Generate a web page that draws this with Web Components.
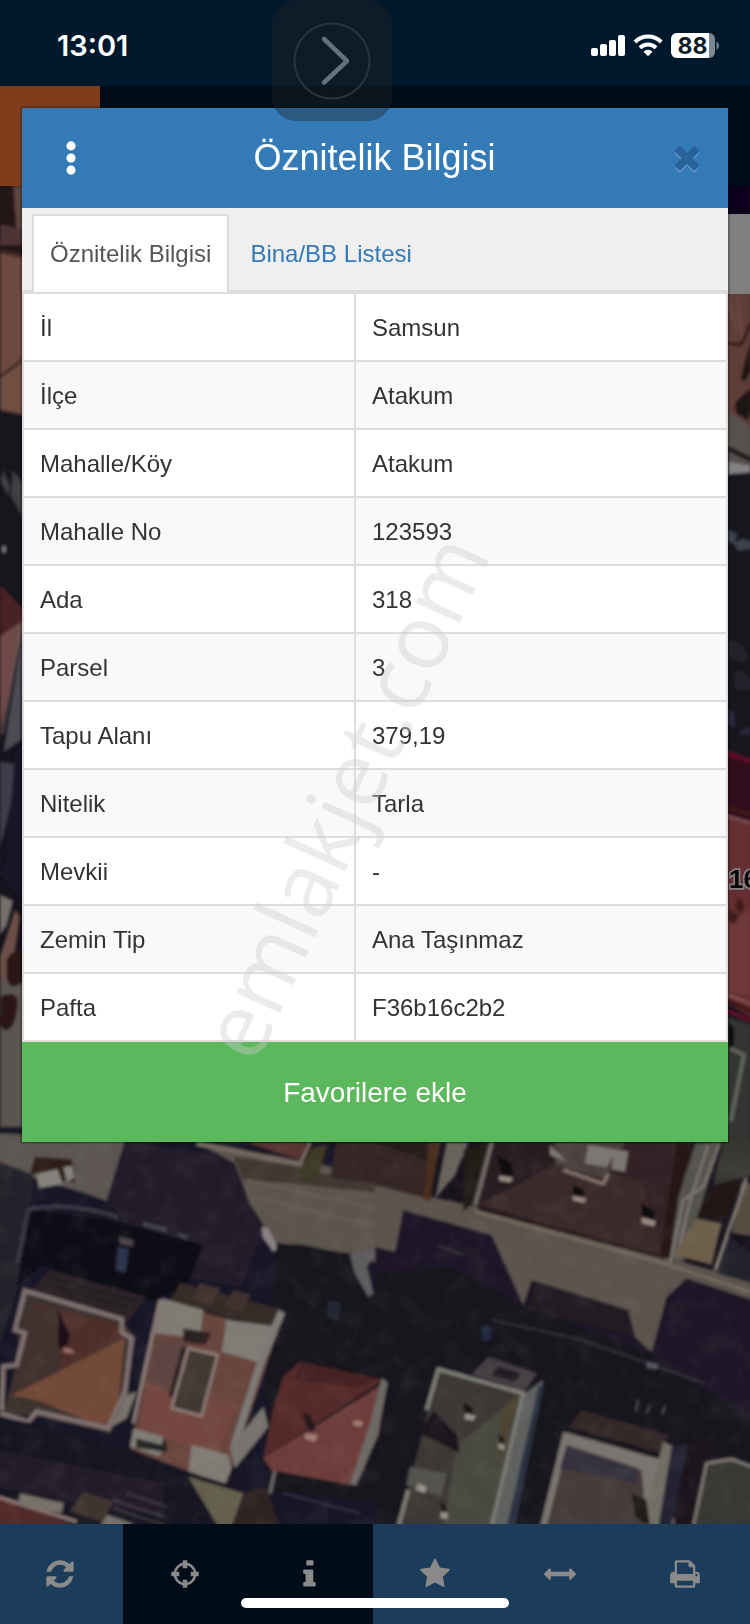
<!DOCTYPE html>
<html lang="tr">

<head>
  <meta charset="utf-8">
  <title>Öznitelik Bilgisi</title>
  <style>
    html, body { margin: 0; padding: 0; }
    body {
      width: 750px;
      height: 1624px;
      overflow: hidden;
      background: #17131d;
      font-family: "Liberation Sans", Arial, sans-serif;
    }
  </style>
</head>

<body>
  <parcel-app>
    <attribute-dialog heading="Öznitelik Bilgisi">
      <tab-item slot="tabs" active>Öznitelik Bilgisi</tab-item>
      <tab-item slot="tabs">Bina/BB Listesi</tab-item>
      <attribute-row name="İl">Samsun</attribute-row>
      <attribute-row name="İlçe">Atakum</attribute-row>
      <attribute-row name="Mahalle/Köy">Atakum</attribute-row>
      <attribute-row name="Mahalle No">123593</attribute-row>
      <attribute-row name="Ada">318</attribute-row>
      <attribute-row name="Parsel">3</attribute-row>
      <attribute-row name="Tapu Alanı">379,19</attribute-row>
      <attribute-row name="Nitelik">Tarla</attribute-row>
      <attribute-row name="Mevkii">-</attribute-row>
      <attribute-row name="Zemin Tip">Ana Taşınmaz</attribute-row>
      <attribute-row name="Pafta">F36b16c2b2</attribute-row>
      <span slot="action">Favorilere ekle</span>
    </attribute-dialog>
  </parcel-app>

  <script>
    function define(name, html) {
      customElements.define(name, class extends HTMLElement {
        constructor() {
          super();
          this.attachShadow({ mode: "open" }).innerHTML = html;
        }
      });
    }

    const icons = {
      refresh: `<path d="M1639 1056q0 5-1 7-64 268-268 434.5t-478 166.5q-146 0-282.5-55t-243.5-157l-129 129q-19 19-45 19t-45-19-19-45v-448q0-26 19-45t45-19h448q26 0 45 19t19 45-19 45l-137 137q71 66 161 102t187 36q134 0 250-65t186-179q11-17 53-117 8-23 30-23h192q13 0 22.5 9.5t9.5 22.5zm25-800v448q0 26-19 45t-45 19h-448q-26 0-45-19t-19-45 19-45l138-138q-148-137-349-137-134 0-250 65t-186 179q-11 17-53 117-8 23-30 23h-199q-13 0-22.5-9.5t-9.5-22.5v-7q65-268 270-434.5t480-166.5q146 0 284 55.5t245 156.5l130-129q19-19 45-19t45 19 19 45z"/>`,
      crosshairs: `<circle cx="896" cy="896" r="570" fill="none" stroke="currentColor" stroke-width="140"/>
        <g stroke="currentColor" stroke-width="250">
          <path d="M896 128v448M896 1216v448M128 896h448M1216 896h448"/>
        </g>`,
      info: `<rect x="690" y="128" width="400" height="290" rx="60"/>
        <path d="M576 640h440q64 0 64 64v640h70q64 0 64 64v128q0 64-64 64H576q-64 0-64-64v-128q0-64 64-64h70V896h-70q-64 0-64-64V704q0-64 64-64z"/>`,
      star: `<path d="M1728 647q0 22-26 48l-363 354 86 500q1 7 1 20 0 21-10.5 35.5t-30.5 14.5q-19 0-40-12l-449-236-449 236q-22 12-40 12-21 0-31.5-14.5t-10.5-35.5q0-6 2-20l86-500-364-354q-25-27-25-48 0-37 56-46l502-73 225-455q19-41 49-41t49 41l225 455 502 73q56 9 56 46z"/>`,
      arrows: `<path d="M1792 896q0 26-19 45l-256 256q-19 19-45 19t-45-19-19-45v-128h-1024v128q0 26-19 45t-45 19-45-19l-256-256q-19-19-19-45t19-45l256-256q19-19 45-19t45 19 19 45v128h1024v-128q0-26 19-45t45-19 45 19l256 256q19 19 19 45z"/>`,
      print: `<path d="M448 1536h896v-256h-896v256zm0-640h896v-384h-160q-40 0-68-28t-28-68v-160h-640v640zm1152 64q0-26-19-45t-45-19-45 19-19 45 19 45 45 19 45-19 19-45zm128 0v416q0 13-9.5 22.5t-22.5 9.5h-224v160q0 40-28 68t-68 28h-960q-40 0-68-28t-28-68v-160h-224q-13 0-22.5-9.5t-9.5-22.5v-416q0-79 56.5-135.5t135.5-56.5h64v-544q0-40 28-68t68-28h672q40 0 88 20t76 48l152 152q28 28 48 76t20 88v256h64q79 0 135.5 56.5t56.5 135.5z"/>`,
      times: `<path d="M1490 1322q0 40-28 68l-136 136q-28 28-68 28t-68-28l-294-294-294 294q-28 28-68 28t-68-28l-136-136q-28-28-28-68t28-68l294-294-294-294q-28-28-28-68t28-68l136-136q28-28 68-28t68 28l294 294 294-294q28-28 68-28t68 28l136 136q28 28 28 68t-28 68l-294 294 294 294q28 28 28 68z"/>`,
      dots: `<circle cx="896" cy="218" r="255"/><circle cx="896" cy="896" r="255"/><circle cx="896" cy="1574" r="255"/>`
    };

    customElements.define("fa-icon", class extends HTMLElement {
      constructor() {
        super();
        this.attachShadow({ mode: "open" });
      }

      connectedCallback() {
        this.shadowRoot.innerHTML = `
          <style>
            :host { display: block; width: 32px; height: 32px; }
            svg { display: block; width: 100%; height: 100%; overflow: visible; }
          </style>
          <svg viewBox="0 0 1792 1792" fill="currentColor">${icons[this.getAttribute("name")]}</svg>`;
      }
    });

    define("status-bar", `
      <style>
        :host {
          display: flex;
          justify-content: space-between;
          align-items: center;
          box-sizing: border-box;
          height: 86px;
          padding: 4px 31px 0 57px;
          background: #00182b;
          color: #fff;
          font-family: Inter, sans-serif;
        }
        .time { padding-top: 1px; font-size: 29px; font-weight: 600; }
        svg { display: block; }
        text { font: 700 23px Inter, sans-serif; }
      </style>
      <span class="time">13:01</span>
      <svg width="129" height="28" viewBox="590 30 129 28">
        <g fill="#fff">
          <rect x="591" y="47" width="7" height="8" rx="2"/>
          <rect x="600" y="43" width="7" height="12" rx="2"/>
          <rect x="609" y="39" width="7" height="16" rx="2"/>
          <rect x="618" y="34" width="7" height="21" rx="2"/>
          <path d="M643.5 50.8a6 6 0 0 1 9 0l-4.5 4.4z"/>
        </g>
        <g fill="none" stroke="#fff" stroke-width="4">
          <path d="M635 41a18.6 18.6 0 0 1 26.2 0"/>
          <path d="M640 46.8a11.4 11.4 0 0 1 16 0"/>
        </g>
        <rect x="671" y="32" width="44" height="25" rx="6" fill="#7b8791"/>
        <path d="M677 32h32v25h-32a6 6 0 0 1-6-6V38a6 6 0 0 1 6-6z" fill="#fff"/>
        <path d="M716.5 40.500q2.500 1.500 2.500 4.200t-2.500 4.200z" fill="#7b8791"/>
        <text x="692.500" y="52.500" text-anchor="middle" fill="#0a1c28">88</text>
      </svg>
    `);

    define("top-strip", `
      <style>
        :host { display: flex; height: 100px; background: #000d18; }
        div { width: 100px; background: #803d1b; }
      </style>
      <div></div>
    `);

    // Shapes are grouped per map tile, each group in its own tile units.
    define("satellite-map", `
      <style>
        :host { display: block; position: absolute; inset: 0; overflow: hidden; }
        svg { display: block; }
      </style>
      <svg width="750" height="1624" viewBox="0 0 750 1624">
        <defs>
          <filter id="soft" x="0" y="0" width="100%" height="100%"><feGaussianBlur stdDeviation="1.5"/></filter>
          <filter id="grain" x="0" y="0" width="100%" height="100%">
            <feTurbulence type="fractalNoise" baseFrequency=".045" numOctaves="3" seed="4"/>
            <feColorMatrix values="0 0 0 0 .5  0 0 0 0 .45  0 0 0 0 .45  1.4 0 0 0 -.62"/>
          </filter>
        </defs>
        <rect width="750" height="1624" fill="#17131d"/>
        <g filter="url(#soft)">
          <!-- west edge -->
          <g transform="translate(0 180) scale(.3333 .6186)">
            <path fill="#241619" d="M0 0h75v120H0z"/>
            <path fill="#5f4440" d="M40 10h35v70H50z"/>
            <path fill="#4d3435" d="M0 72l75 8v25H0z"/>
            <path fill="#6d4940" d="M0 118l75 8v160l-75 30z"/>
            <path fill="#6f5040" d="M0 320l75-30v90l-75-8z"/>
            <path stroke="#3d2523" stroke-width="5" d="M0 115l75 7M0 318l75-30" fill="none"/>
            <path fill="#14121c" d="M0 374l75 8v330H0z"/>
            <path fill="#403f42" d="M38 470l30 20v55l-35-35zM10 470l20 25-5 15-25-25z"/>
            <circle cx="12" cy="597" r="6" fill="#777"/>
            <path fill="#4a2428" d="M0 655l75 42v20L0 740z"/>
            <path fill="#6e4947" d="M0 738l75-28-70 175-5 25z"/>
            <path fill="#4b4b52" d="M70 720L10 925l55-20z"/>
            <path stroke="#716660" stroke-width="4" d="M64 722L8 895" fill="none"/>
            <path fill="#3c3e4b" d="M0 940l55 5L20 1040 0 1080z"/>
            <path fill="#151725" d="M45 925l30-15v260L0 1120l20-20z"/>
            <path fill="#75706c" d="M0 1155l40 10-20 40-20 15z"/>
            <path fill="#6d4f49" d="M45 1180l15 10-25 95-35 30v-60z"/>
            <path fill="#5a5551" d="M0 1290l75 10v268H0z"/>
            <path fill="#2c1916" d="M20 1260q10-15 50-15v50q-40 20-50-5zM2 1320q40-10 52 5-5 50-40 50-20-5-12-25z"/>
          </g>

          <!-- east edge -->
          <path fill="#07051a" d="M725 180h25v36h-25z"/>
          <g transform="translate(700 280) scale(.3333)">
            <path fill="#5f3c37" d="M75 0h80v500H75z"/>
            <path stroke="#6d4a43" stroke-width="7" d="M84 50l25 100M110 50l20 130" fill="none"/>
            <path stroke="#321c1e" stroke-width="10" d="M84 190l40 5 30-70" fill="none"/>
            <path fill="#1b1217" d="M150 185l-28 110 10 12 20-30zM105 370q25-30 48-45v70l-10 28-35-25z"/>
            <path fill="#57514f" d="M84 395l35 20 36 30v140H84z"/>
            <path stroke="#241a1a" stroke-width="16" d="M84 505l70 35" fill="none"/>
            <path fill="#858382" d="M84 545l66 12v28H84z"/>
            <path fill="#14121e" d="M75 583l80-6v720H75z"/>
            <path fill="#3c424f" d="M100 790l25-14 30 10v20l-40 6zM84 750l28 12-10 30-18-10z"/>
            <path fill="#24202a" d="M84 1080l40 10 26 40-20 20-46-20zM100 1180l30-10 25 30v40l-50-10z"/>
          </g>
          <g transform="translate(700 690) scale(.3333)">
            <path fill="#15141f" d="M75 0h80v220H75z"/>
            <path fill="#2b2c3d" d="M84 60l20 10v40l-20-5zM110 130l40-20v25z"/>
            <path fill="#300e1b" d="M75 190l80 25v185l-80-25z"/>
            <path fill="#652f31" d="M75 375l80 27v580l-80-45z"/>
            <path fill="#703937" d="M75 700l80-40v260l-80-20z"/>
            <path stroke="#6b0d2c" stroke-width="11" d="M75 188l80 26M75 960l80 32" fill="none"/>
            <path stroke="#87585b" stroke-width="6" d="M75 376l80 24M75 912l80 30" fill="none"/>
            <path stroke="#401419" stroke-width="14" d="M75 352l80 22M75 930l80 35" fill="none"/>
            <path fill="#421b1e" d="M115 620l20 25-12 30-20-25zM84 655l35 22-15 25-20-8z"/>
            <path fill="#303433" d="M75 978l80 25v380H75z"/>
            <path stroke="#636660" stroke-width="11" d="M90 1075l42 20-40 200" fill="none"/>
            <path fill="#111" d="M84 1000l18 10v55l-18 14z"/>
          </g>

          <!-- south west tile -->
          <g transform="translate(0 1130) scale(.3333)">
            <path fill="#191625" d="M-10 -10h1140v1200H-10z"/>
            <path fill="#5c5451" d="M-10 10l385 20-55 182-85-30-245-70z"/>
            <path fill="#21222c" d="M-10 90l110 45-45 330-65 210z"/>
            <path fill="#2d1d17" d="M105 80l110 8 10 70-75-10-60-20z"/>
            <path fill="#85817b" d="M108 132l65-15 15 45-70 12zM190 112l25-5 8 35-22 15z"/>
            <path fill="#211b29" d="M375 35l325 45 85 230-60 160-250-40-145-220z"/>
            <path fill="#100d18" d="M90 240l270 35 250 70-50 130-120 40-320-110-70 70z"/>
            <path stroke="#393743" stroke-width="12" d="M52 400L85 238q130-25 270 25" fill="none"/>
            <path stroke="#45454f" stroke-width="12" d="M430 282l70 18M535 312l28 12" fill="none"/>
            <path fill="#2c344e" d="M355 350l30 8-8 70-30-8z"/>
            <path fill="#464044" d="M360 320l40 10v20l-40-8z"/>
            <path fill="#5c544e" d="M580 30l560 110v260L920 345l-95-5-75-120-45-120z"/>
            <path fill="#3f3931" d="M700 80l190 30 250 60v20l-270-30-140-10z"/>
            <path stroke="#655d55" stroke-width="8" d="M740 150l400 90M750 200l390 90" fill="none"/>
            <path stroke="#7a6b62" stroke-width="10" d="M590 42l310 60 30-65" fill="none"/>
            <path fill="#593631" d="M740 36h180l-20 55z"/>
            <path fill="#352727" d="M1010 36h130v130l-150-25z"/>
            <path fill="#3a3821" d="M935 55l45-10-20 80-40 30-25-25z"/>
            <path fill="#8a8182" d="M785 290l20 5 30 60-15 10-32-45z"/>
            <path fill="#15121d" d="M830 340l220 30 90 150v600l-330-40-15-300z"/>
            <path fill="#5f5b5f" d="M1050 375l90-25-40 60 20 80-15 10-40-70z"/>
            <path fill="#232532" d="M985 510l40 8-10 55-35-10z"/>
            <path fill="#2b2125" d="M150 420l290 80-60 80-285-100z"/>
            <path stroke="#201b21" stroke-width="5" d="M140 440l270 75M125 460l265 75" fill="none"/>
            <!-- hip roof house -->
            <path fill="#3c302f" d="M70 480l295 90 40 50-25 170-50 120-210-50-110-10 35-130z"/>
            <path fill="#4f2f2c" d="M100 520l255 65 20 40-340 170z"/>
            <path fill="#41302e" d="M100 530l75 10 10 180-150 75z"/>
            <path fill="#724839" d="M375 625L35 795l90 20 190 80 35-40z"/>
            <path fill="none" stroke="#7d706f" stroke-width="14" d="M5 840L10 710l40-5 25-95-30-10 30-118 290 85v40l30 18-20 160-50 110-215-50-25 30-85-25"/>
            <path fill="#1b0f12" d="M175 540l35 75-15 55-20-25z"/>
            <path fill="#9a6b60" d="M190 650l30 10v12l-30-5z"/>
            <path fill="#77716b" d="M335 890l45-95 30-10-30 80z"/>
            <!-- terrace house -->
            <path fill="#342925" d="M540 460l310 80-30 60-310-85z"/>
            <path fill="#3f322f" d="M600 460l60 15-25 50-60-20zM700 480l50 15-20 50-55-15z"/>
            <path fill="#68443d" d="M480 510l350 100-150 450-290-90z"/>
            <path fill="#734741" d="M440 760l270 60-60 160-230-80z"/>
            <path fill="#7f7c74" d="M485 505l125 35-10 85-135-15zM680 570l155 20-50 110-120-35zM575 945l110 30 10 40-20 45-110-35zM400 895l90 25-10 60-90-30z"/>
            <path fill="#5f4442" d="M470 625l80 10-35 150-75-30z"/>
            <path fill="#2b2020" d="M550 595l85 15-20 35-65-10zM545 650h15l-35 150h-20z"/>
            <path fill="#403733" d="M565 660l85 20-45 175-90-25z"/>
            <path fill="none" stroke="#8a7975" stroke-width="9" d="M565 655l88 20-48 183-90-24z"/>
            <path fill="none" stroke="#8a7b77" stroke-width="10" d="M480 510l-80 370"/>
            <path fill="none" stroke="#7c7975" stroke-width="22" d="M845 545l-65 160-80 250"/>
            <path fill="#77736f" d="M790 830l15 60-100 125-15-60z"/>
            <path fill="#222" d="M410 925l75 20 10-25 8 45-95-10z"/>
            <!-- alley -->
            <path fill="#191622" d="M-10 860l110 20 300 80 180 70 50 160H-10z"/>
            <path fill="#211e2b" d="M-10 960l500 100v100l-500-90z"/>
            <path fill="#645e4b" d="M565 1040l165 50-35 100h-40z"/>
            <path fill="#2d2220" d="M730 1090l70-20 40 130H695z"/>
            <path fill="#522c2c" d="M-10 1100l220 80v20H-10z"/>
            <path stroke="#8b7773" stroke-width="10" d="M-10 1100l240 75" fill="none"/>
            <path fill="#77716a" d="M60 1090l130 30-5 30-130-25zM305 1150l90 30v15h-90z"/>
            <path fill="#41342e" d="M250 1085l90 30-30 60-100-30z"/>
            <path stroke="#474046" stroke-width="5" d="M340 1110l150 50M380 1090l120 40M340 1135l150 50" fill="none"/>
            <path stroke="#6d6867" stroke-width="10" d="M825 1020l-15 70" fill="none"/>
            <path stroke="#32303f" stroke-width="6" d="M850 1090l230 60" fill="none"/>
          </g>

          <!-- south east tile -->
          <g transform="translate(375 1130) scale(.3333)">
            <path fill="#5c534d" d="M0 165l310 65 560 150 265 75v250H0z"/>
            <path fill="#352727" d="M0 36h200l-40 170-160-40z"/>
            <path fill="#251a1b" d="M0 36h155v55L0 40z"/>
            <path fill="#4a2e1f" d="M165 36h30l-30 180-20-10z"/>
            <path fill="#66645c" d="M215 36h65l-40 100-60 70z"/>
            <path fill="#201a16" d="M265 60l75-25-50 190-25 20z"/>
            <path fill="#332227" d="M350 36h590l-70 350-560-160z"/>
            <path fill="#281b23" d="M350 36h180l20 60-230 125z"/>
            <path fill="#3a2a2c" d="M310 225l250-130 240 60 65 225z"/>
            <path fill="#281815" d="M905 36h45l-65 350-30-10z"/>
            <path stroke="#77706b" stroke-width="12" d="M350 36l-50 190" fill="none"/>
            <path stroke="#251614" stroke-width="10" d="M310 235l560 148" fill="none"/>
            <path stroke="#776c61" stroke-width="8" d="M300 245l550 150 275 90" fill="none"/>
            <path fill="#4c4140" d="M540 36h210l-60 110-150-45z"/>
            <path fill="#7d7773" d="M640 45l120 20-10 60-40-8 5-40-20 35-65-12zM525 45l50 50-50-20z"/>
            <path stroke="#85776f" stroke-width="9" d="M565 120l120 42 15-30" fill="none"/>
            <path fill="#0f090d" d="M365 75l40 20 10 40-35-5zM595 165l35 15-5 20-32-5zM800 220l40 25-5 25-35-10z"/>
            <path fill="#9b8d84" d="M372 137l42 6-8 14-32-5zM592 198l42 8-8 12-32-7zM800 262l42 12-5 15-37-10z"/>
            <path fill="#55524e" d="M960 40l80-5-45 140-70 220-40-10 25-180z"/>
            <path stroke="#7c7974" stroke-width="7" d="M1035 40l-50 130-60 40-40 190M1000 45l-50 150-45 190" fill="none"/>
            <path fill="#393831" d="M1045 36h90v100l-120 30z"/>
            <path fill="#201918" d="M1010 170l95-20-55 120-85-10z"/>
            <path fill="#6d5f4b" d="M965 265l75 15-30 125-115-30z"/>
            <path fill="#23202a" d="M1050 310l80 60v90l-105-30z"/>
            <path fill="#574e43" d="M1100 160h40v160l-70-10z"/>
            <path stroke="#817b72" stroke-width="10" d="M1115 145l-95 275" fill="none"/>
            <!-- shadows over the street -->
            <path fill="#1c1925" d="M85 240l265 75 95 210 25-75 290 90 20 80 50 45 45-165 60-55 200 65v700H0V350l60 15z"/>
            <path fill="#15121d" d="M0 430l230-20 220 120 400 150 300 100v400H0z"/>
            <path fill="#221d24" d="M480 455l280 90 10 70-310-75z"/>
            <path fill="#1a1827" d="M930 455l200 60v350l-280-170z"/>
            <path stroke="#332f39" stroke-width="7" d="M350 570l270 60 200 70 170 60M190 345l75 32" fill="none"/>
            <path fill="#5a5563" d="M815 695l35 8-5 15-30-5z"/>
            <path fill="#242b43" d="M320 590l25-5 5 40-25 10z"/>
            <path stroke="#494653" stroke-width="6" fill="none" d="M790 810l-8 35M825 825l-10 25M870 825l-8 30"/>
            <path fill="#443e42" d="M340 680l145 50-35 55-160-50z"/>
            <path fill="#241a20" d="M370 710l70 20-20 25-70-20z"/>
            <!-- grey roof -->
            <path fill="#3a3834" d="M190 720l255 75-95 400H70z"/>
            <path fill="#4a4840" d="M435 795l-190 150-40 250h140z"/>
            <path fill="#4d4430" d="M385 825l50-30-70 220-20 175z"/>
            <path fill="#1c171c" d="M175 840l70 75 10 55-120-60z"/>
            <path fill="#55534d" d="M105 1010l110 20-15 70-105-35z"/>
            <path fill="#120e11" d="M265 815l30 20-5 25-25-15zM370 910l20 20-15 15zM195 1110l20 25-10 25z"/>
            <path fill="#96938a" d="M272 850l30 8-8 14-25-5zM130 1060l25 10-5 20-28-10zM370 940l18 5v15l-18-5zM198 1145l22 5-5 18-18-5z"/>
            <path fill="none" stroke="#7d7c75" stroke-width="12" d="M70 1190l30-110M155 840l35-122 255 72-95 400"/>
            <path fill="#5f6061" d="M450 790l55-40-105 440h-45z"/>
            <path fill="#2b3040" d="M490 770l30-20-100 440h-25z"/>
            <path fill="#19131b" d="M510 745l110-75-90 520H420z"/>
            <path fill="#322627" d="M620 840l260 75-20 55-280-80z"/>
            <!-- white parapet roof -->
            <path fill="#7a756f" d="M565 905l315 90 20 195H495z"/>
            <path fill="#443a3a" d="M575 950l225 70 15 170H515z"/>
            <path fill="#34323e" d="M575 945l215 70-5 45-230-45z"/>
            <path fill="#211a17" d="M770 1090l45 20 10 80-45-30z"/>
            <path fill="#716e66" d="M865 935l30 15-45 240h-25l-5-80z"/>
            <path fill="#212230" d="M890 950l50-10-50 250h-40z"/>
            <path fill="#1a131a" d="M940 930l90 10-75 250h-60z"/>
            <path fill="#393834" d="M990 1000l75-15 70 25v190H960z"/>
            <path fill="none" stroke="#7b7772" stroke-width="9" d="M955 1190l40-190 75-12 60 22"/>
          </g>

          <!-- red roof, across both tiles -->
          <g transform="translate(0 1130) scale(.3333)">
            <path fill="#54292b" d="M850 740l50-45 250 55L790 985l30-150z"/>
            <path fill="#6d3d3a" d="M1145 765L790 985l25 35 240 45 80-150z"/>
            <path fill="#462024" d="M900 695l235 52-60 25-190-20z"/>
            <path fill="#24141a" d="M905 850l25 5 18 45-20 5z"/>
            <path fill="#a27b75" d="M915 910l40 5-10 20-30-8zM1065 870l25 5-8 15-25-5z"/>
            <path fill="#6d6966" d="M1145 745l18 12-30 160-65 150-18-6 60-180z"/>
          </g>
        </g>
        <rect y="1142" width="750" height="390" filter="url(#grain)" opacity=".12"/>
        <path fill="#7f7f7f" d="M728 214h22v80h-22z"/>
        <text x="729" y="888" font-family="Liberation Sans, Arial, sans-serif" font-size="26" font-weight="700"
          fill="#0b0708" stroke="#858080" stroke-width="3.500" paint-order="stroke">16</text>
      </svg>
    `);

    define("bottom-toolbar", `
      <style>
        :host {
          display: grid;
          grid-template-columns: repeat(6, 125px);
          height: 100px;
          margin-left: -2px;
          border-right: 2px solid #1c3c5b;
          width: 750px;
          color: #8a8a8a;
        }
        div {
          display: grid;
          place-items: center;
          padding: 0 1px 1px 0;
          background: #1c3c5b;
        }
        .dark { background: #000d18; }
      </style>
      <div><fa-icon name="refresh"></fa-icon></div>
      <div class="dark"><fa-icon name="crosshairs"></fa-icon></div>
      <div class="dark"><fa-icon name="info"></fa-icon></div>
      <div><fa-icon name="star"></fa-icon></div>
      <div><fa-icon name="arrows"></fa-icon></div>
      <div><fa-icon name="print"></fa-icon></div>
    `);

    define("tab-item", `
      <style>
        :host {
          display: flex;
          align-items: center;
          box-sizing: border-box;
          height: 78px;
          padding: 0 16px;
          border: 2px solid transparent;
          border-bottom: 0;
          color: #337ab7;
          font-size: 24px;
          white-space: nowrap;
        }
        :host([active]) {
          background: #fff;
          border-color: #ddd;
          color: #555;
        }
      </style>
      <slot></slot>
    `);

    customElements.define("attribute-row", class extends HTMLElement {
      constructor() {
        super();
        this.attachShadow({ mode: "open" });
      }

      connectedCallback() {
        this.shadowRoot.innerHTML = `
          <style>
            :host {
              display: grid;
              grid-template-columns: 332px 1fr;
              height: 66px;
              border-bottom: 2px solid #ddd;
              background: #fff;
              color: #333;
              font-size: 24px;
              line-height: 67px;
            }
            :host(:nth-of-type(even)) { background: #f9f9f9; }
            div { height: 66px; padding-left: 16px; }
            .name { border-right: 2px solid #ddd; }
          </style>
          <div class="name">${this.getAttribute("name")}</div>
          <div><slot></slot></div>`;
      }
    });

    customElements.define("attribute-dialog", class extends HTMLElement {
      constructor() {
        super();
        this.attachShadow({ mode: "open" });
      }

      connectedCallback() {
        this.shadowRoot.innerHTML = `
          <style>
            :host {
              display: block;
              width: 706px;
              background: #fff;
              box-shadow: 0 0 2px 1px rgba(0, 0, 0, .4);
            }
            header {
              display: grid;
              grid-template-columns: 97px 1fr 82px;
              align-items: center;
              height: 100px;
              background: #337ab7;
              color: #fff;
            }
            h1 {
              margin: 0;
              padding-right: 16px;
              font-size: 36px;
              font-weight: 400;
              line-height: 100px;
              text-align: center;
            }
            .menu { justify-self: center; }
            .close {
              width: 36px;
              height: 36px;
              margin: -2px 0 0 23px;
              color: #29629a;
              filter: drop-shadow(0 2px 0 rgba(255, 255, 255, .22));
            }
            nav {
              display: flex;
              gap: 3px;
              height: 78px;
              padding: 6px 10px 0;
              background: #efefef;
              box-shadow: inset 0 -2px #ddd;
            }
            .table {
              border: 2px solid #ddd;
              border-bottom: 0;
            }
            footer {
              height: 100px;
              background: #5cb85c;
              color: #fff;
              font-size: 28px;
              line-height: 101px;
              text-align: center;
            }
          </style>
          <header>
            <fa-icon class="menu" name="dots"></fa-icon>
            <h1>${this.getAttribute("heading")}</h1>
            <fa-icon class="close" name="times"></fa-icon>
          </header>
          <nav><slot name="tabs"></slot></nav>
          <div class="table"><slot></slot></div>
          <footer><slot name="action"></slot></footer>`;
      }
    });

    define("water-mark", `
      <style>
        :host { display: block; position: absolute; inset: 0; }
        text { font-family: "Open Sans", "Noto Sans", sans-serif; font-size: 90px; }
      </style>
      <svg width="750" height="1624">
        <text transform="translate(256 1066) rotate(-65.3)" fill="rgba(205, 205, 205, .4)">emlakjet.com</text>
      </svg>
    `);

    define("assistive-button", `
      <style>
        :host {
          display: grid;
          place-items: center;
          position: absolute;
          left: 272px;
          top: 0;
          width: 120px;
          height: 121px;
          border-radius: 24px;
          background: rgba(36, 36, 40, .38);
        }
      </style>
      <svg width="80" height="80" fill="none">
        <circle cx="40" cy="40" r="37.500" stroke="#27353f" stroke-width="2"/>
        <path d="M32 18l23 22L32 61.500" stroke="#65727b" stroke-width="4.500" stroke-linecap="round" stroke-linejoin="round"/>
      </svg>
    `);

    define("parcel-app", `
      <style>
        :host {
          display: flex;
          flex-direction: column;
          position: relative;
          width: 750px;
          height: 1624px;
          overflow: hidden;
        }
        status-bar, top-strip, bottom-toolbar { position: relative; flex: none; }
        .spacer { flex: 1; }
        .overlay { position: absolute; left: 22px; top: 108px; }
        .home {
          position: absolute;
          left: 241px;
          bottom: 16px;
          width: 268px;
          height: 10px;
          border-radius: 5px;
          background: #fff;
        }
      </style>
      <satellite-map></satellite-map>
      <status-bar></status-bar>
      <top-strip></top-strip>
      <div class="spacer"></div>
      <bottom-toolbar></bottom-toolbar>
      <div class="overlay"><slot></slot></div>
      <assistive-button></assistive-button>
      <water-mark></water-mark>
      <div class="home"></div>
    `);
  </script>
</body>

</html>
